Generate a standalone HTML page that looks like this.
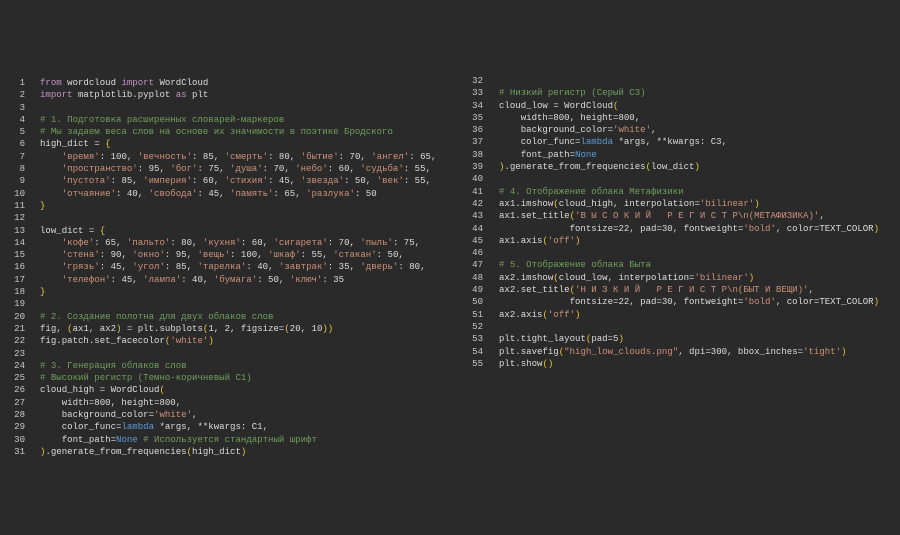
<!DOCTYPE html>
<html><head><meta charset="utf-8"><style>
html,body{margin:0;padding:0;background:#2a2a2b;width:900px;height:535px;overflow:hidden}
.col{position:absolute;font-family:"Liberation Mono","DejaVu Sans Mono",monospace;font-size:9.05px;color:#dcdcdc;white-space:normal;width:440px}
.l{height:12.3px;line-height:12.3px;position:relative;white-space:pre}
.l>span{position:absolute;top:0}
.n{text-align:right;width:20px;left:0;color:#c8c8c8}
.k{color:#c394c0}.s{color:#ce9178}.c{color:#6f9f5a}.b{color:#e8c53a}.v{color:#5d9bd6}
</style></head><body>
<div class="col" style="left:5px;top:77px">
<div class="l"><span class="n">1</span><span style="left:35px"><span class="k">from</span> wordcloud <span class="k">import</span> WordCloud</span></div>
<div class="l"><span class="n">2</span><span style="left:35px"><span class="k">import</span> matplotlib.pyplot <span class="k">as</span> plt</span></div>
<div class="l"><span class="n">3</span></div>
<div class="l"><span class="n">4</span><span style="left:35px" class="c"># 1. Подготовка расширенных словарей-маркеров</span></div>
<div class="l"><span class="n">5</span><span style="left:35px" class="c"># Мы задаем веса слов на основе их значимости в поэтике Бродского</span></div>
<div class="l"><span class="n">6</span><span style="left:35px">high_dict = <span class="b">{</span></span></div>
<div class="l"><span class="n">7</span><span style="left:35px">    <span class="s">'время'</span>: 100, <span class="s">'вечность'</span>: 85, <span class="s">'смерть'</span>: 80, <span class="s">'бытие'</span>: 70, <span class="s">'ангел'</span>: 65,</span></div>
<div class="l"><span class="n">8</span><span style="left:35px">    <span class="s">'пространство'</span>: 95, <span class="s">'бог'</span>: 75, <span class="s">'душа'</span>: 70, <span class="s">'небо'</span>: 60, <span class="s">'судьба'</span>: 55,</span></div>
<div class="l"><span class="n">9</span><span style="left:35px">    <span class="s">'пустота'</span>: 85, <span class="s">'империя'</span>: 60, <span class="s">'стихия'</span>: 45, <span class="s">'звезда'</span>: 50, <span class="s">'век'</span>: 55,</span></div>
<div class="l"><span class="n">10</span><span style="left:35px">    <span class="s">'отчаяние'</span>: 40, <span class="s">'свобода'</span>: 45, <span class="s">'память'</span>: 65, <span class="s">'разлука'</span>: 50</span></div>
<div class="l"><span class="n">11</span><span style="left:35px"><span class="b">}</span></span></div>
<div class="l"><span class="n">12</span></div>
<div class="l"><span class="n">13</span><span style="left:35px">low_dict = <span class="b">{</span></span></div>
<div class="l"><span class="n">14</span><span style="left:35px">    <span class="s">'кофе'</span>: 65, <span class="s">'пальто'</span>: 80, <span class="s">'кухня'</span>: 60, <span class="s">'сигарета'</span>: 70, <span class="s">'пыль'</span>: 75,</span></div>
<div class="l"><span class="n">15</span><span style="left:35px">    <span class="s">'стена'</span>: 90, <span class="s">'окно'</span>: 95, <span class="s">'вещь'</span>: 100, <span class="s">'шкаф'</span>: 55, <span class="s">'стакан'</span>: 50,</span></div>
<div class="l"><span class="n">16</span><span style="left:35px">    <span class="s">'грязь'</span>: 45, <span class="s">'угол'</span>: 85, <span class="s">'тарелка'</span>: 40, <span class="s">'завтрак'</span>: 35, <span class="s">'дверь'</span>: 80,</span></div>
<div class="l"><span class="n">17</span><span style="left:35px">    <span class="s">'телефон'</span>: 45, <span class="s">'лампа'</span>: 40, <span class="s">'бумага'</span>: 50, <span class="s">'ключ'</span>: 35</span></div>
<div class="l"><span class="n">18</span><span style="left:35px"><span class="b">}</span></span></div>
<div class="l"><span class="n">19</span></div>
<div class="l"><span class="n">20</span><span style="left:35px" class="c"># 2. Создание полотна для двух облаков слов</span></div>
<div class="l"><span class="n">21</span><span style="left:35px">fig, <span class="b">(</span>ax1, ax2<span class="b">)</span> = plt.subplots<span class="b">(</span>1, 2, figsize=<span class="b">(</span>20, 10<span class="b">))</span></span></div>
<div class="l"><span class="n">22</span><span style="left:35px">fig.patch.set_facecolor<span class="b">(</span><span class="s">'white'</span><span class="b">)</span></span></div>
<div class="l"><span class="n">23</span></div>
<div class="l"><span class="n">24</span><span style="left:35px" class="c"># 3. Генерация облаков слов</span></div>
<div class="l"><span class="n">25</span><span style="left:35px" class="c"># Высокий регистр (Темно-коричневый C1)</span></div>
<div class="l"><span class="n">26</span><span style="left:35px">cloud_high = WordCloud<span class="b">(</span></span></div>
<div class="l"><span class="n">27</span><span style="left:35px">    width=800, height=800,</span></div>
<div class="l"><span class="n">28</span><span style="left:35px">    background_color=<span class="s">'white'</span>,</span></div>
<div class="l"><span class="n">29</span><span style="left:35px">    color_func=<span class="v">lambda</span> *args, **kwargs: C1,</span></div>
<div class="l"><span class="n">30</span><span style="left:35px">    font_path=<span class="v">None</span> <span class="c"># Используется стандартный шрифт</span></span></div>
<div class="l"><span class="n">31</span><span style="left:35px"><span class="b">)</span>.generate_from_frequencies<span class="b">(</span>high_dict<span class="b">)</span></span></div>
</div>
<div class="col" style="left:463px;top:75px">
<div class="l"><span class="n">32</span></div>
<div class="l"><span class="n">33</span><span style="left:36px" class="c"># Низкий регистр (Серый C3)</span></div>
<div class="l"><span class="n">34</span><span style="left:36px">cloud_low = WordCloud<span class="b">(</span></span></div>
<div class="l"><span class="n">35</span><span style="left:36px">    width=800, height=800,</span></div>
<div class="l"><span class="n">36</span><span style="left:36px">    background_color=<span class="s">'white'</span>,</span></div>
<div class="l"><span class="n">37</span><span style="left:36px">    color_func=<span class="v">lambda</span> *args, **kwargs: C3,</span></div>
<div class="l"><span class="n">38</span><span style="left:36px">    font_path=<span class="v">None</span></span></div>
<div class="l"><span class="n">39</span><span style="left:36px"><span class="b">)</span>.generate_from_frequencies<span class="b">(</span>low_dict<span class="b">)</span></span></div>
<div class="l"><span class="n">40</span></div>
<div class="l"><span class="n">41</span><span style="left:36px" class="c"># 4. Отображение облака Метафизики</span></div>
<div class="l"><span class="n">42</span><span style="left:36px">ax1.imshow<span class="b">(</span>cloud_high, interpolation=<span class="s">'bilinear'</span><span class="b">)</span></span></div>
<div class="l"><span class="n">43</span><span style="left:36px">ax1.set_title<span class="b">(</span><span class="s">'В Ы С О К И Й   Р Е Г И С Т Р\n(МЕТАФИЗИКА)'</span>,</span></div>
<div class="l"><span class="n">44</span><span style="left:36px">             fontsize=22, pad=30, fontweight=<span class="s">'bold'</span>, color=TEXT_COLOR<span class="b">)</span></span></div>
<div class="l"><span class="n">45</span><span style="left:36px">ax1.axis<span class="b">(</span><span class="s">'off'</span><span class="b">)</span></span></div>
<div class="l"><span class="n">46</span></div>
<div class="l"><span class="n">47</span><span style="left:36px" class="c"># 5. Отображение облака Быта</span></div>
<div class="l"><span class="n">48</span><span style="left:36px">ax2.imshow<span class="b">(</span>cloud_low, interpolation=<span class="s">'bilinear'</span><span class="b">)</span></span></div>
<div class="l"><span class="n">49</span><span style="left:36px">ax2.set_title<span class="b">(</span><span class="s">'Н И З К И Й   Р Е Г И С Т Р\n(БЫТ И ВЕЩИ)'</span>,</span></div>
<div class="l"><span class="n">50</span><span style="left:36px">             fontsize=22, pad=30, fontweight=<span class="s">'bold'</span>, color=TEXT_COLOR<span class="b">)</span></span></div>
<div class="l"><span class="n">51</span><span style="left:36px">ax2.axis<span class="b">(</span><span class="s">'off'</span><span class="b">)</span></span></div>
<div class="l"><span class="n">52</span></div>
<div class="l"><span class="n">53</span><span style="left:36px">plt.tight_layout<span class="b">(</span>pad=5<span class="b">)</span></span></div>
<div class="l"><span class="n">54</span><span style="left:36px">plt.savefig<span class="b">(</span><span class="s">"high_low_clouds.png"</span>, dpi=300, bbox_inches=<span class="s">'tight'</span><span class="b">)</span></span></div>
<div class="l"><span class="n">55</span><span style="left:36px">plt.show<span class="b">()</span></span></div>
</div>
</body></html>
